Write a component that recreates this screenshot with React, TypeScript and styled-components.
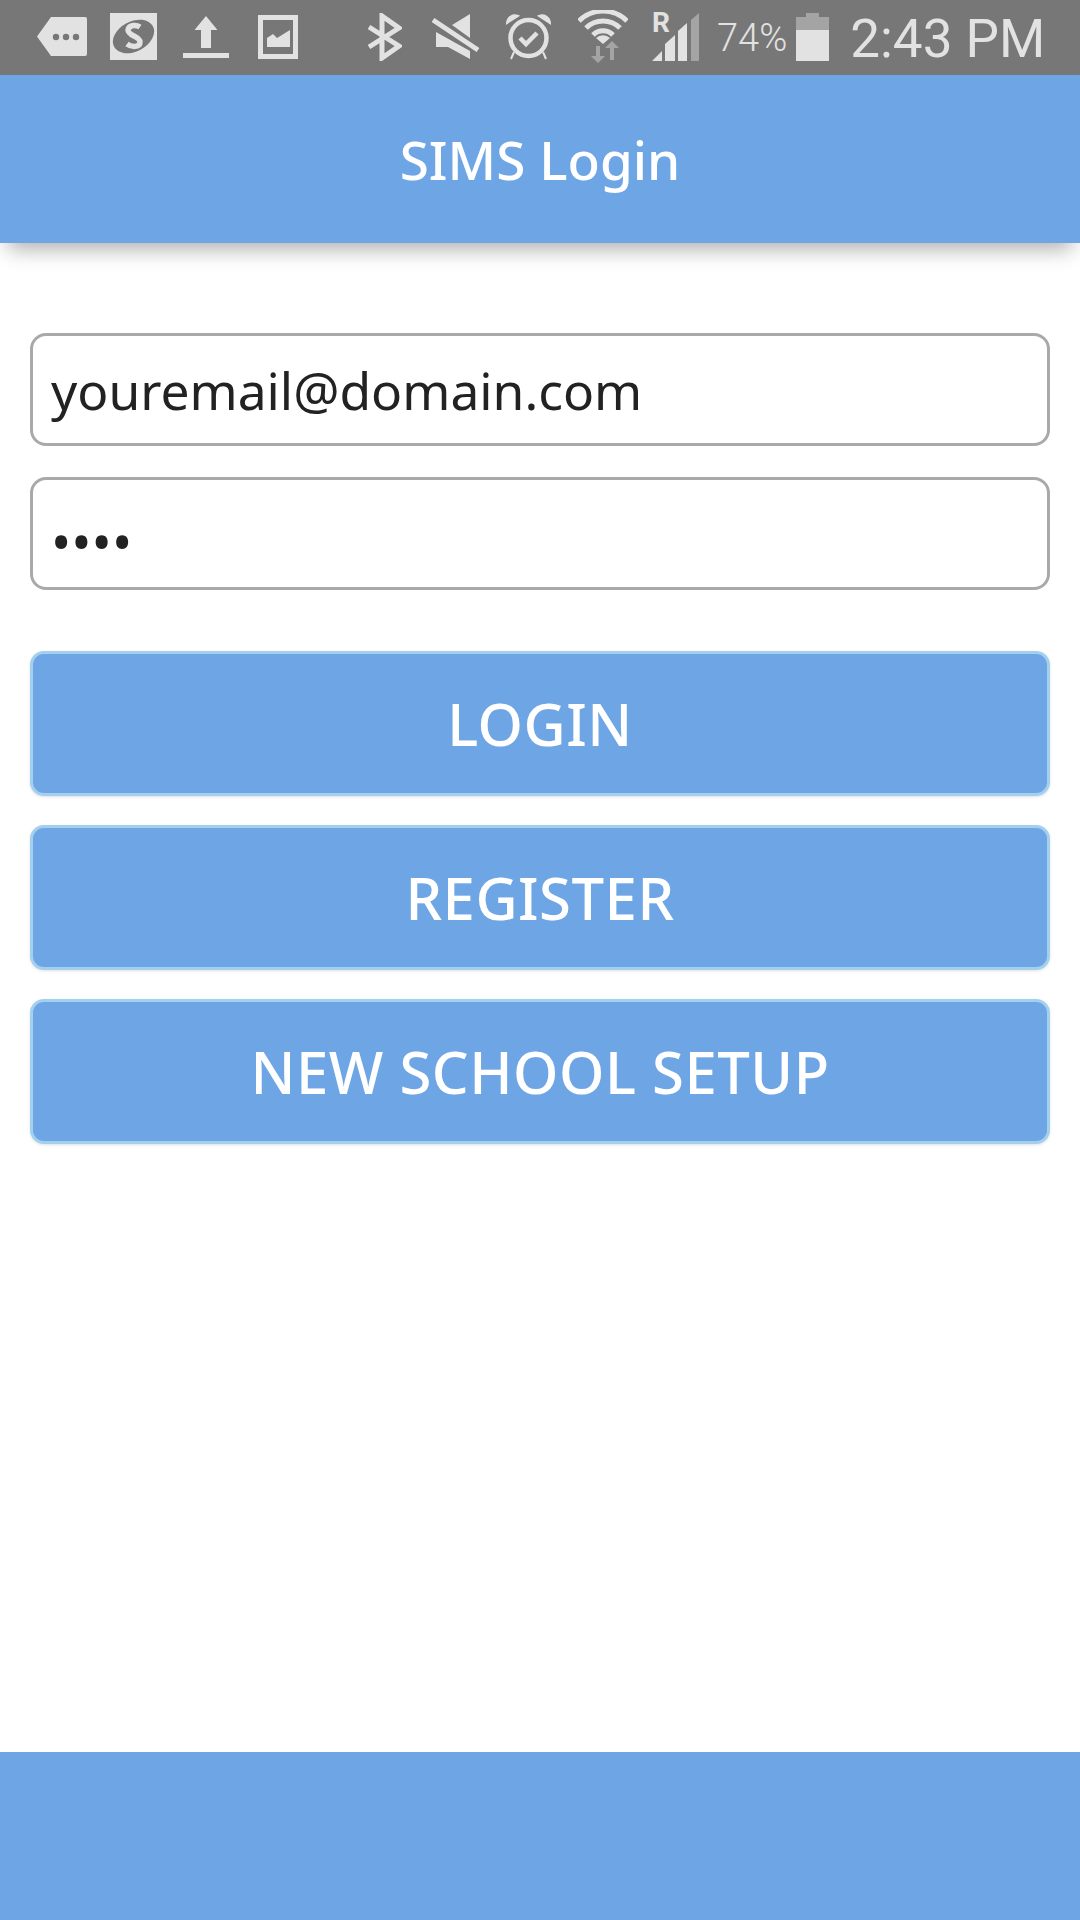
import styled, { createGlobalStyle } from "styled-components";

const BLUE = "#6ea5e5";

const GlobalStyle = createGlobalStyle`
  html, body {
    margin: 0;
    padding: 0;
    background: #ffffff;
  }
`;

function App() {
  return (
    <>
      <GlobalStyle />
      <Page>
        <StatusBar>
          <StatusIcon $w={50} $h={39} $ml={37} viewBox="0 0 50 39">
            <path d="M14 0h34a2 2 0 0 1 2 2v35a2 2 0 0 1-2 2H14L0 19.500Z" fill="#e2e2e2" />
            <circle cx="19" cy="20" r="3.200" fill="#777" />
            <circle cx="29" cy="20" r="3.200" fill="#777" />
            <circle cx="39" cy="20" r="3.200" fill="#777" />
          </StatusIcon>
          <StatusIcon $w={47} $h={47} $ml={23} viewBox="0 0 47 47">
            <rect width="47" height="47" fill="#e2e2e2" />
            <ellipse cx="23.500" cy="23.500" rx="22" ry="15" transform="rotate(-28 23.500 23.500)" fill="#777" />
            <path d="M30 14c-3-2-11-3-12 3 0 6 12 6 12 12 0 6-9 5-13 2" fill="none" stroke="#e2e2e2" strokeWidth="5.500" />
          </StatusIcon>
          <StatusIcon $w={46} $h={42} $ml={26} viewBox="0 0 46 42">
            <path d="M23 0l11.500 14H28v18H18V14h-6.500ZM0 37h46v5H0Z" fill="#e2e2e2" />
          </StatusIcon>
          <StatusIcon $w={40} $h={44} $ml={29} viewBox="0 0 40 44">
            <path fillRule="evenodd" d="M0 0h40v44H0ZM5 5v34h30V5Z" fill="#e2e2e2" />
            <path d="M9 32v-9l6-4 4 4 13-8v17Z" fill="#e2e2e2" />
          </StatusIcon>
          <StatusIcon $w={34} $h={48} $ml={70} viewBox="0 0 34 48">
            <path d="M1 14l30 19-17 12V3l17 12L1 34" fill="none" stroke="#e2e2e2" strokeWidth="5" />
          </StatusIcon>
          <StatusIcon $w={48} $h={46} $ml={30} viewBox="0 0 48 46">
            <path d="M20 11L38 0v24ZM4 18v15h12l22 12v-8Z" fill="#e2e2e2" />
            <path d="M1 6l45 30" stroke="#e2e2e2" strokeWidth="5" />
          </StatusIcon>
          <StatusIcon $w={47} $h={47} $ml={25} viewBox="0 0 47 47">
            <circle cx="23.500" cy="25" r="18" fill="none" stroke="#e2e2e2" strokeWidth="4.500" />
            <path d="M2 10a8 8 0 0 1 11-7ZM45 10a8 8 0 0 0-11-7ZM9 39l-3 7M38 39l3 7" fill="#e2e2e2" stroke="#e2e2e2" strokeWidth="2" />
            <path d="M15 25l6 6 11-11" fill="none" stroke="#e2e2e2" strokeWidth="4.500" />
          </StatusIcon>
          <StatusIcon $w={50} $h={53} $ml={26} viewBox="0 0 50 53">
            <path d="M1 11a34 34 0 0 1 48 0M8 18a24 24 0 0 1 34 0M15 25a14 14 0 0 1 20 0" fill="none" stroke="#e2e2e2" strokeWidth="5" />
            <path d="M25 34l-7-6a10 10 0 0 1 14 0Z" fill="#e2e2e2" />
            <path d="M18 36v10h-5l7 7 7-7h-5V36ZM32 50V38h-5l7-7 7 7h-5v12Z" fill="#a4a4a4" />
          </StatusIcon>
          <SignalBlock>
            <RoamLetter>R</RoamLetter>
            <StatusIcon $w={48} $h={48} $ml={0} viewBox="0 0 48 48">
              <path d="M0 48l10-10v10ZM13 48V31l10-9v26ZM26 48V18l9-8v38Z" fill="#e2e2e2" />
              <path d="M39 48V7l8-7v48Z" fill="#a4a4a4" />
            </StatusIcon>
          </SignalBlock>
          <Percent>74%</Percent>
          <StatusIcon $w={33} $h={48} $ml={9} viewBox="0 0 33 48">
            <path d="M10 0h13v4h10v13H0V4h10Z" fill="#a4a4a4" />
            <path d="M0 17h33v31H0Z" fill="#e2e2e2" />
          </StatusIcon>
          <Clock>2:43 PM</Clock>
        </StatusBar>
        <TitleBar>SIMS Login</TitleBar>
        <Form>
          <Field type="text" readOnly value="youremail@domain.com" />
          <Field type="password" readOnly value="1234" $secret />
          <Actions>
            <ActionButton>LOGIN</ActionButton>
            <ActionButton>REGISTER</ActionButton>
            <ActionButton>NEW SCHOOL SETUP</ActionButton>
          </Actions>
        </Form>
        <Footer />
      </Page>
    </>
  );
}

export default App;

const Page = styled.div`
  width: 1080px;
  height: 1920px;
  display: flex;
  flex-direction: column;
  font-family: "Noto Sans", "Open Sans", sans-serif;
  overflow: hidden;
`;

const StatusBar = styled.div`
  box-sizing: border-box;
  height: 75px;
  padding-bottom: 2px;
  flex: none;
  background: #777777;
  display: flex;
  align-items: center;
`;

const StatusIcon = styled.svg<{ $w: number; $h: number; $ml: number }>`
  flex: none;
  width: ${(p) => p.$w}px;
  height: ${(p) => p.$h}px;
  margin-left: ${(p) => p.$ml}px;
`;

const SignalBlock = styled.div`
  position: relative;
  margin-left: 24px;
  display: flex;
`;

const RoamLetter = styled.span`
  position: absolute;
  left: 0;
  top: -2px;
  font: 700 28px/24px "Roboto", sans-serif;
  color: #e2e2e2;
`;

const Percent = styled.span`
  margin-left: 17px;
  padding-top: 2px;
  font: 300 38px/40px "Roboto", sans-serif;
  color: #e2e2e2;
`;

const Clock = styled.span`
  margin-left: 21px;
  padding-top: 4px;
  font: 400 53px/60px "Roboto", sans-serif;
  color: #e2e2e2;
  white-space: nowrap;
`;

const TitleBar = styled.div`
  height: 168px;
  flex: none;
  background: ${BLUE};
  box-shadow: 0 14px 20px -8px rgba(0, 0, 0, 0.32);
  display: flex;
  align-items: center;
  justify-content: center;
  color: #ffffff;
  font-size: 53px;
  font-weight: 500;
  position: relative;
`;

const Form = styled.div`
  flex: 1;
  display: flex;
  flex-direction: column;
  gap: 31px;
  padding: 90px 30px 0;
`;

const Field = styled.input<{ $secret?: boolean }>`
  box-sizing: border-box;
  width: 100%;
  height: 113px;
  padding: ${(p) => (p.$secret ? "14px" : "0")} 18px 0;
  border: 3px solid #a9a9a9;
  border-radius: 16px;
  background: #ffffff;
  color: #222222;
  font-family: inherit;
  font-size: ${(p) => (p.$secret ? "54px" : "51.5px")};
  outline: none;
`;

const Actions = styled.div`
  display: flex;
  flex-direction: column;
  gap: 29px;
  margin-top: 30px;
`;

const ActionButton = styled.button`
  box-sizing: border-box;
  height: 145px;
  padding: 0;
  border: 3px solid #a3d0ee;
  border-radius: 14px;
  background: ${BLUE};
  color: #ffffff;
  font-family: inherit;
  font-size: 58px;
  font-weight: 500;
  letter-spacing: 0.5px;
  box-shadow: 0 1px 3px rgba(0, 0, 0, 0.12);
`;

const Footer = styled.div`
  height: 168px;
  flex: none;
  background: ${BLUE};
`;
